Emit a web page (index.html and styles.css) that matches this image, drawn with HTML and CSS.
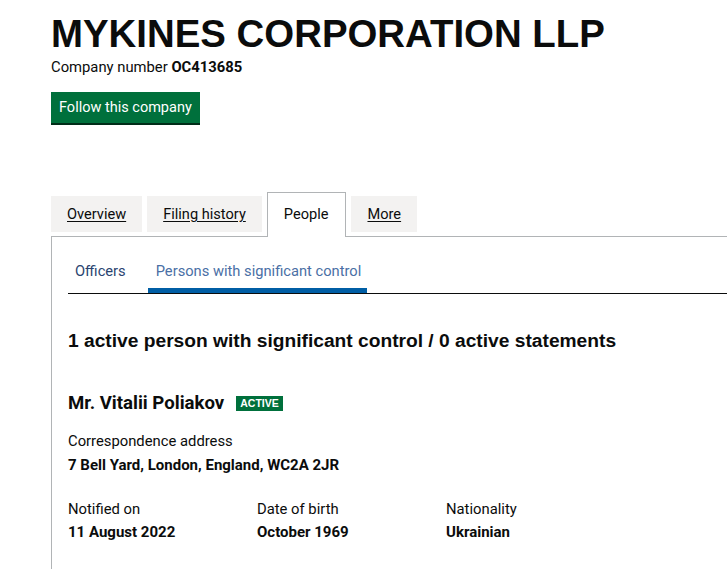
FILE: index.html
```html
<!DOCTYPE html>
<html>
<head>
<meta charset="utf-8">
<link rel="stylesheet" href="styles.css">
</head>
<body>
<main class="page">
  <h1 class="title">MYKINES CORPORATION LLP</h1>
  <p class="company-number">Company number <strong>OC413685</strong></p>
  <a class="follow-btn" href="#">Follow this company</a>

  <nav class="tabs">
    <a class="tab" href="#">Overview</a>
    <a class="tab" href="#">Filing history</a>
    <span class="tab tab-active">People</span>
    <a class="tab" href="#">More</a>
  </nav>

  <section class="panel">
    <div class="subtabs">
      <a class="subtab" href="#">Officers</a>
      <a class="subtab subtab-active" href="#">Persons with significant control</a>
    </div>

    <h2 class="summary">1 active person with significant control / 0 active statements</h2>

    <div class="person">
      <h3 class="person-name">Mr. Vitalii Poliakov <span class="tag">ACTIVE</span></h3>
      <dl class="field">
        <dt>Correspondence address</dt>
        <dd>7 Bell Yard, London, England, WC2A 2JR</dd>
      </dl>
      <div class="field-row">
        <dl class="field col">
          <dt>Notified on</dt>
          <dd>11 August 2022</dd>
        </dl>
        <dl class="field col">
          <dt>Date of birth</dt>
          <dd>October 1969</dd>
        </dl>
        <dl class="field col">
          <dt>Nationality</dt>
          <dd>Ukrainian</dd>
        </dl>
      </div>
    </div>
  </section>
</main>
</body>
</html>
```

FILE: styles.css
```css
html, body {
  margin: 0;
  padding: 0;
  background: #fff;
  overflow: hidden;
}
body {
  font-family: "Roboto", "Liberation Sans", sans-serif;
  color: #0b0c0c;
}
.page {
  margin-left: 51px;
  width: 676px;
  padding-top: 14px;
}
.title {
  font-family: "Liberation Sans", Arial, sans-serif;
  font-weight: 700;
  font-size: 38.4px;
  line-height: 40px;
  margin: 0;
  color: #0b0c0c;
}
.company-number {
  margin: 3px 0 0 0;
  font-size: 14.8px;
  line-height: 20px;
}
.company-number strong {
  font-weight: 700;
}
.follow-btn {
  display: inline-block;
  margin-top: 15px;
  background: #00703c;
  color: #fff;
  text-decoration: none;
  font-size: 14.5px;
  line-height: 19px;
  padding: 6px 8px 6px 8px;
  box-shadow: 0 2px 0 #002d18;
}
.tabs {
  display: flex;
  align-items: flex-end;
  gap: 5px;
  margin-top: 69px;
  height: 44px;
}
.tab {
  display: block;
  background: #f3f2f1;
  color: #0b0c0c;
  font-size: 14.6px;
  line-height: 20px;
  padding: 8px 16px 8px 16px;
  margin-bottom: 4px;
  text-decoration: underline;
  text-underline-offset: 2px;
}
.tab-active {
  background: #fff;
  text-decoration: none;
  border: 1px solid #b1b4b6;
  border-bottom: 0;
  padding: 11px 17px 13px 16px;
  margin-bottom: -1px;
  position: relative;
  z-index: 1;
}
.panel {
  border: 1px solid #b1b4b6;
  border-right: 0;
  padding: 16px 0 40px 16px;
  min-height: 400px;
}
.subtabs {
  display: flex;
  border-bottom: 1px solid #0b0c0c;
}
.subtab {
  display: block;
  font-size: 14.7px;
  line-height: 20px;
  padding: 8px 6px 12px 7px;
  margin-right: 16px;
  color: #2a4470;
  text-decoration: none;
}
.subtab-active {
  color: #4a6fa5;
  border-bottom: 5px solid #005ea5;
  padding: 8px 6px 7px 8px;
}
.summary {
  font-family: "Liberation Sans", Arial, sans-serif;
  font-size: 19.2px;
  line-height: 24px;
  font-weight: 700;
  margin: 35px 0 0 0;
}
.person {
  margin-top: 38px;
}
.person-name {
  font-size: 18.6px;
  line-height: 24px;
  font-weight: 700;
  margin: 0;
  display: flex;
  align-items: center;
  gap: 12px;
}
.tag {
  display: inline-block;
  background: #00703c;
  color: #fff;
  font-family: "Liberation Sans", Arial, sans-serif;
  font-size: 10.5px;
  font-weight: 700;
  line-height: 15px;
  padding: 0 4px;
}
.field {
  margin: 16px 0 0 0;
}
.field dt {
  font-size: 14.8px;
  line-height: 20px;
  color: #0b0c0c;
}
.field dd {
  margin: 4px 0 0 0;
  font-size: 15px;
  line-height: 20px;
  font-weight: 700;
}
.field-row {
  display: flex;
  margin-top: 24px;
}
.field-row .col {
  width: 189px;
  margin: 0;
}
.field-row .col dd {
  margin-top: 3px;
}
```
